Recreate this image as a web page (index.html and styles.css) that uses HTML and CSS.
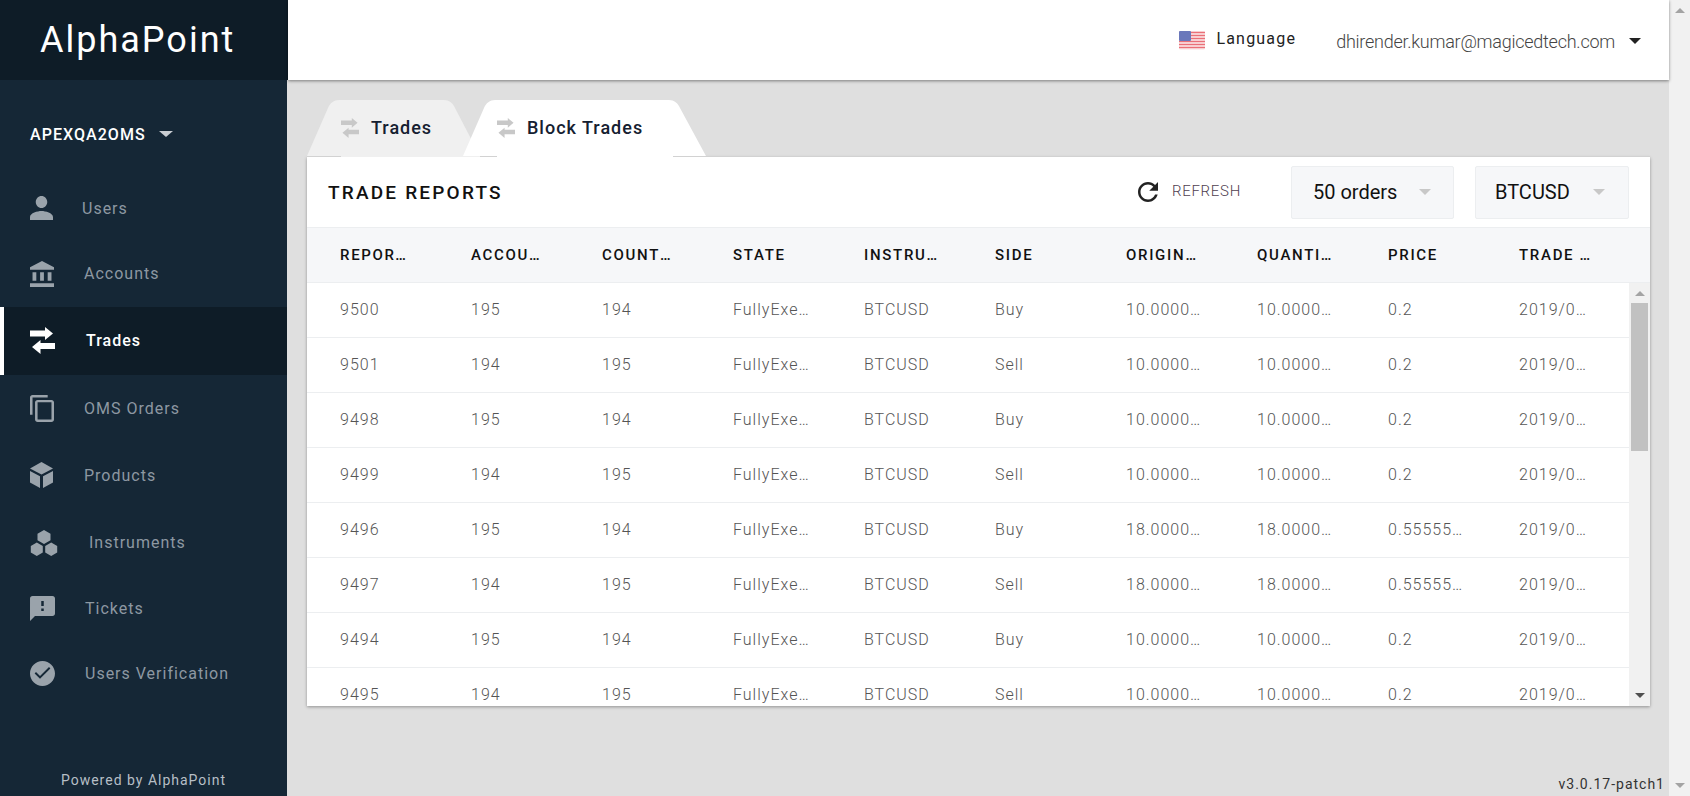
FILE: index.html
```html
<!DOCTYPE html>
<html lang="en">
<head>
    <meta charset="UTF-8">
    <meta name="viewport" content="width=device-width, initial-scale=1.0">
    <title>Trade Reports</title>
    <link rel="stylesheet" href="styles.css">
</head>
<body>
    <div class="app">
        <aside class="sidebar">
            <div class="logo">AlphaPoint</div>
            <div class="oms-select">APEXQA2OMS <span class="caret caret-light"></span></div>
            <nav class="nav">
                <a class="nav-item">
                    <svg class="icon icon-users" viewBox="4 4 16 16" preserveAspectRatio="none"><path d="M12 12c2.210 0 4-1.790 4-4s-1.790-4-4-4-4 1.790-4 4 1.790 4 4 4zm0 2c-2.670 0-8 1.340-8 4v2h16v-2c0-2.660-5.330-4-8-4z"/></svg>
                    Users
                </a>
                <a class="nav-item">
                    <svg class="icon icon-accounts" viewBox="2 1 19 21" preserveAspectRatio="none"><path d="M4 10v7h3v-7H4zm6 0v7h3v-7h-3zM2 22h19v-3H2v3zm14-12v7h3v-7h-3zm-4.500-9L2 6v2h19V6l-9.500-5z"/></svg>
                    Accounts
                </a>
                <a class="nav-item nav-item-active">
                    <svg class="icon icon-trades" viewBox="0 0 25 27"><path d="M0 3.500H15V0L23 6.500 15 13V9.500H0zM25 16H10.500V13L2 20 10.500 27V22H25z"/></svg>
                    Trades
                </a>
                <a class="nav-item">
                    <svg class="icon icon-orders" viewBox="2 1 19 22" preserveAspectRatio="none"><path d="M16 1H4c-1.100 0-2 .9-2 2v14h2V3h12V1zm3 4H8c-1.100 0-2 .9-2 2v14c0 1.100.9 2 2 2h11c1.100 0 2-.9 2-2V7c0-1.100-.9-2-2-2zm0 16H8V7h11v14z"/></svg>
                    OMS Orders
                </a>
                <a class="nav-item">
                    <svg class="icon icon-products" viewBox="0 0 23 26"><path d="M11.500 0L23 6.500 11.500 12.500 0 6.500zM0 9l10 5.300V26L0 20.500zM23 9l-10 5.300V26l10-5.500z"/></svg>
                    Products
                </a>
                <a class="nav-item">
                    <svg class="icon icon-instruments" viewBox="0 0 28 26"><path d="M14 0l6.500 3.700v6.600L14 14l-6.500-3.700V3.700zM6.800 12.500l6 3.500v6.500l-6 3.500-6-3.500V16zM21.200 12.500l6 3.500v6.500l-6 3.500-6-3.500V16z"/></svg>
                    Instruments
                </a>
                <a class="nav-item">
                    <svg class="icon icon-tickets" viewBox="2 2 20 20" preserveAspectRatio="none"><path d="M20 2H4c-1.100 0-1.990.9-1.990 2L2 22l4-4h14c1.100 0 2-.9 2-2V4c0-1.100-.9-2-2-2zm-7 12h-2v-2h2v2zm0-4h-2V6h2v4z"/></svg>
                    Tickets
                </a>
                <a class="nav-item">
                    <svg class="icon icon-verify" viewBox="2 2 20 20"><path d="M12 2C6.480 2 2 6.480 2 12s4.480 10 10 10 10-4.480 10-10S17.520 2 12 2zm-2 14.200l-4.300-4.300 1.100-1.100 3.200 3.200 7.200-7.200 1.100 1.100z"/></svg>
                    Users Verification
                </a>
            </nav>
            <div class="powered">Powered by AlphaPoint</div>
        </aside>

        <div class="main">
            <header class="topbar">
                <svg class="flag" viewBox="0 0 26 19">
                    <rect width="26" height="19" rx="2" fill="#fbeeee"/>
                    <path d="M0 1.500h26M0 4.500h26M0 7.500h26M0 10.500h26M0 13.500h26M0 16.500h26" stroke="#ea7078" stroke-width="1.600"/>
                    <rect width="12" height="10" rx="1" fill="#6a78bb"/>
                </svg>
                <span class="language">Language</span>
                <span class="user">dhirender.kumar@magicedtech.com</span>
                <span class="caret caret-dark"></span>
            </header>

            <div class="content">
                <div class="tabs">
                    <div class="tab">
                        <svg class="tab-shape" viewBox="0 0 173 56" preserveAspectRatio="none"><path d="M0 56L21 8C23 3 27 0 32 0H137C142 0 146 3 148 8L173 56z" fill="#f0f0f0"/></svg>
                        <svg class="tab-icon" viewBox="0 0 25 27" preserveAspectRatio="none"><path d="M0 3.500H15V0L23 6.500 15 13V9.500H0zM25 16H10.500V13L2 20 10.500 27V22H25z"/></svg>
                        <span>Trades</span>
                    </div>
                    <div class="tab tab-active">
                        <svg class="tab-shape" viewBox="0 0 243 56" preserveAspectRatio="none"><path d="M0 56L21 8C23 3 27 0 32 0H206C211 0 215 3 217 8L243 56z" fill="#fff"/></svg>
                        <svg class="tab-icon" viewBox="0 0 25 27" preserveAspectRatio="none"><path d="M0 3.500H15V0L23 6.500 15 13V9.500H0zM25 16H10.500V13L2 20 10.500 27V22H25z"/></svg>
                        <span>Block Trades</span>
                    </div>
                </div>

                <section class="card">
                    <div class="toolbar">
                        <h2 class="title">TRADE REPORTS</h2>
                        <button class="refresh">
                            <svg class="refresh-icon" viewBox="4 4 16 16"><path d="M17.650 6.350C16.200 4.900 14.210 4 12 4c-4.420 0-7.990 3.580-7.990 8s3.570 8 7.990 8c3.730 0 6.840-2.550 7.730-6h-2.080c-.82 2.330-3.040 4-5.650 4-3.310 0-6-2.690-6-6s2.690-6 6-6c1.660 0 3.140.69 4.220 1.780L13 11h7V4l-2.350 2.350z"/></svg>
                            REFRESH
                        </button>
                        <div class="select select-orders">50 orders <span class="caret caret-grey"></span></div>
                        <div class="select select-pair">BTCUSD <span class="caret caret-grey"></span></div>
                    </div>

                    <div class="row row-head">
                        <div class="cell">REPORT ID</div>
                        <div class="cell">ACCOUNT ID</div>
                        <div class="cell">COUNTERPARTY</div>
                        <div class="cell">STATE</div>
                        <div class="cell">INSTRUMENT</div>
                        <div class="cell">SIDE</div>
                        <div class="cell">ORIGINAL QUANTITY</div>
                        <div class="cell">QUANTITY</div>
                        <div class="cell">PRICE</div>
                        <div class="cell">TRADE TIME</div>
                    </div>

                    <div class="table-body">
                        <div class="rows">
                            <div class="row">
                                <div class="cell">9500</div><div class="cell">195</div><div class="cell">194</div><div class="cell">FullyExecuted</div><div class="cell">BTCUSD</div><div class="cell">Buy</div><div class="cell">10.00000000</div><div class="cell">10.00000000</div><div class="cell">0.2</div><div class="cell">2019/05/30</div>
                            </div>
                            <div class="row">
                                <div class="cell">9501</div><div class="cell">194</div><div class="cell">195</div><div class="cell">FullyExecuted</div><div class="cell">BTCUSD</div><div class="cell">Sell</div><div class="cell">10.00000000</div><div class="cell">10.00000000</div><div class="cell">0.2</div><div class="cell">2019/05/30</div>
                            </div>
                            <div class="row">
                                <div class="cell">9498</div><div class="cell">195</div><div class="cell">194</div><div class="cell">FullyExecuted</div><div class="cell">BTCUSD</div><div class="cell">Buy</div><div class="cell">10.00000000</div><div class="cell">10.00000000</div><div class="cell">0.2</div><div class="cell">2019/05/30</div>
                            </div>
                            <div class="row">
                                <div class="cell">9499</div><div class="cell">194</div><div class="cell">195</div><div class="cell">FullyExecuted</div><div class="cell">BTCUSD</div><div class="cell">Sell</div><div class="cell">10.00000000</div><div class="cell">10.00000000</div><div class="cell">0.2</div><div class="cell">2019/05/30</div>
                            </div>
                            <div class="row">
                                <div class="cell">9496</div><div class="cell">195</div><div class="cell">194</div><div class="cell">FullyExecuted</div><div class="cell">BTCUSD</div><div class="cell">Buy</div><div class="cell">18.00000000</div><div class="cell">18.00000000</div><div class="cell">0.55555556</div><div class="cell">2019/05/30</div>
                            </div>
                            <div class="row">
                                <div class="cell">9497</div><div class="cell">194</div><div class="cell">195</div><div class="cell">FullyExecuted</div><div class="cell">BTCUSD</div><div class="cell">Sell</div><div class="cell">18.00000000</div><div class="cell">18.00000000</div><div class="cell">0.55555556</div><div class="cell">2019/05/30</div>
                            </div>
                            <div class="row">
                                <div class="cell">9494</div><div class="cell">195</div><div class="cell">194</div><div class="cell">FullyExecuted</div><div class="cell">BTCUSD</div><div class="cell">Buy</div><div class="cell">10.00000000</div><div class="cell">10.00000000</div><div class="cell">0.2</div><div class="cell">2019/05/30</div>
                            </div>
                            <div class="row">
                                <div class="cell">9495</div><div class="cell">194</div><div class="cell">195</div><div class="cell">FullyExecuted</div><div class="cell">BTCUSD</div><div class="cell">Sell</div><div class="cell">10.00000000</div><div class="cell">10.00000000</div><div class="cell">0.2</div><div class="cell">2019/05/30</div>
                            </div>
                        </div>
                        <div class="scrollbar scrollbar-inner">
                            <span class="arrow-up"></span>
                            <span class="thumb"></span>
                            <span class="arrow-down"></span>
                        </div>
                    </div>
                </section>

                <div class="version">v3.0.17-patch1</div>
            </div>
        </div>

        <div class="scrollbar scrollbar-page">
            <span class="arrow-up"></span>
            <span class="arrow-down"></span>
        </div>
    </div>
</body>
</html>
```

FILE: styles.css
```css
* {
    box-sizing: border-box;
}

body {
    margin: 0;
    font-family: Roboto, "Liberation Sans", sans-serif;
    background-color: #dfdfdf;
    overflow: hidden;
}

.app {
    display: flex;
    height: 796px;
}

/* sidebar */
.sidebar {
    width: 288px;
    flex: none;
    display: flex;
    flex-direction: column;
    background-color: #152736;
    border-right: 1px solid #dfdfdf;
}

.logo {
    height: 80px;
    margin-right: -1px;
    padding-left: 40px;
    background-color: #0e1c27;
    color: #fff;
    font-size: 36px;
    line-height: 80px;
    letter-spacing: 2px;
}

.oms-select {
    height: 96px;
    padding: 12px 0 0 30px;
    display: flex;
    align-items: center;
    color: #fff;
    font-size: 16px;
    font-weight: 500;
    letter-spacing: 1.05px;
}

.oms-select .caret {
    margin-left: 13px;
}

.nav {
    display: grid;
    grid-template-rows: 64px 67px 68px 66px 68px 67px 65px 64px;
}

.nav-item {
    display: flex;
    align-items: center;
    padding-left: 30px;
    color: #8d98a2;
    font-size: 16px;
    letter-spacing: 1px;
}

.nav-item-active {
    background-color: #0e1c27;
    border-left: 4px solid #fff;
    padding: 0 0 2px 26px;
    color: #fff;
    font-weight: 500;
}

.icon {
    flex: none;
    fill: #9aa3ab;
}

.nav-item-active .icon {
    fill: #fff;
}

.icon-users { width: 23px; height: 24px; margin-right: 29px; }
.icon-accounts { width: 24px; height: 26px; margin-right: 30px; }
.icon-trades { width: 25px; height: 27px; margin-right: 31px; }
.icon-orders { width: 24px; height: 27px; margin-right: 30px; }
.icon-products { width: 23px; height: 26px; margin-right: 31px; }
.icon-instruments { width: 28px; height: 26px; margin-right: 31px; }
.icon-tickets { width: 25px; height: 25px; margin-right: 30px; }
.icon-verify { width: 25px; height: 25px; margin-right: 30px; }

.powered {
    margin-top: auto;
    padding-bottom: 8px;
    text-align: center;
    color: #b7bfc6;
    font-size: 14px;
    letter-spacing: 1px;
}

/* carets */
.caret {
    display: inline-block;
    width: 0;
    height: 0;
    border-left: 6px solid transparent;
    border-right: 6px solid transparent;
    border-top: 6px solid currentColor;
}

.caret-light {
    color: #c9ced3;
    border-left-width: 7px;
    border-right-width: 7px;
}

.caret-dark { color: #222; }
.caret-grey { color: #c8c8c8; }

/* main */
.main {
    flex: 1;
    min-width: 0;
    display: flex;
    flex-direction: column;
}

.topbar {
    height: 80px;
    display: flex;
    align-items: center;
    padding: 2px 28px 0 0;
    background-color: #fff;
    box-shadow: 0 1px 3px rgba(0, 0, 0, 0.45);
    position: relative;
}

.flag {
    width: 26px;
    height: 19px;
    margin-left: auto;
    margin-right: 11px;
    margin-top: -2px;
}

.language {
    margin-top: -5px;
    margin-right: 40px;
    color: #222;
    font-size: 16px;
    letter-spacing: 1.2px;
}

.user {
    margin-right: 14px;
    color: #444;
    font-size: 18px;
    font-weight: 300;
    letter-spacing: -0.25px;
}

.content {
    flex: 1;
    position: relative;
    padding: 20px 19px 0 19px;
}

/* tabs */
.tabs {
    display: flex;
    height: 57px;
    position: relative;
    z-index: 1;
}

.tab {
    position: relative;
    width: 173px;
    height: 56px;
    display: flex;
    align-items: center;
    padding: 0 0 1px 34px;
    color: #152030;
    font-size: 18px;
    font-weight: 500;
    letter-spacing: 1px;
}

.tab span,
.tab-icon {
    position: relative;
}

.tab-shape {
    position: absolute;
    left: 0;
    top: 0;
    width: 100%;
    height: 100%;
}

.tab-icon {
    width: 18px;
    height: 20px;
    margin-right: 12px;
    fill: #c8c8c8;
}

.tab::after {
    content: "";
    position: absolute;
    left: 34px;
    right: 0;
    bottom: -1px;
    height: 2px;
    background-color: #f0f0f0;
}

.tab-active {
    width: 243px;
    margin-left: -17px;
}

.tab-active::after {
    right: 33px;
    background-color: #fff;
}

/* card */
.card {
    width: 1343px;
    height: 549px;
    display: flex;
    flex-direction: column;
    background-color: #fff;
    box-shadow: 0 -1px 0 #d2d2d2, 0 1px 3px rgba(0, 0, 0, 0.35);
}

.toolbar {
    height: 70px;
    flex: none;
    display: flex;
    align-items: center;
    padding: 0 21px;
}

.title {
    margin: 0 auto 0 0;
    color: #111;
    font-size: 19px;
    font-weight: 500;
    letter-spacing: 2.2px;
}

.refresh {
    display: flex;
    align-items: center;
    margin-right: 50px;
    padding: 0 0 2px;
    border: none;
    background: none;
    color: #4f4050;
    font-family: inherit;
    font-size: 15px;
    font-weight: 300;
    letter-spacing: 0.7px;
}

.refresh-icon {
    width: 20px;
    height: 20px;
    margin: 2px 14px 0 0;
    fill: #222;
}

.select {
    height: 53px;
    display: flex;
    align-items: center;
    justify-content: space-between;
    background-color: #f6f7f9;
    border: 1px solid #eceef0;
    border-radius: 2px;
    color: #111;
    font-size: 20px;
}

.select-orders {
    width: 163px;
    margin-right: 21px;
    padding: 0 22px 0 21px;
}

.select-pair {
    width: 154px;
    padding: 0 23px 0 19px;
}

/* table */
.row {
    display: grid;
    grid-template-columns: repeat(10, 131px);
    height: 55px;
    padding: 0 0 2px 12px;
    align-items: center;
    border-bottom: 1px solid #eceef0;
}

.row-head {
    flex: none;
    height: 56px;
    padding-bottom: 0;
    background-color: #f6f7f9;
    border-top: 1px solid #eceef0;
}

.cell {
    padding: 0 34px 0 21px;
    white-space: nowrap;
    overflow: hidden;
    text-overflow: ellipsis;
    color: #555;
    font-size: 16px;
    font-weight: 300;
    letter-spacing: 1px;
}

.row-head .cell {
    color: #111;
    font-size: 15px;
    font-weight: 500;
    letter-spacing: 1.7px;
}

.table-body {
    flex: 1;
    min-height: 0;
    display: flex;
}

.rows {
    flex: 1;
    min-width: 0;
    overflow: hidden;
}

/* scrollbars */
.scrollbar {
    width: 21px;
    flex: none;
    display: flex;
    flex-direction: column;
    align-items: center;
    background-color: #f1f1f1;
}

.arrow-up,
.arrow-down {
    width: 0;
    height: 0;
    border-left: 5px solid transparent;
    border-right: 5px solid transparent;
}

.arrow-up {
    margin-top: 8px;
    border-bottom: 5px solid #a3a3a3;
}

.arrow-down {
    margin-top: auto;
    margin-bottom: 8px;
    border-top: 5px solid #505050;
}

.scrollbar-page .arrow-down {
    border-top-color: #a3a3a3;
}

.thumb {
    width: 17px;
    height: 148px;
    margin-top: 7px;
    background-color: #c1c1c1;
}

.version {
    position: absolute;
    right: 4px;
    bottom: 4px;
    color: #333;
    font-size: 14px;
    letter-spacing: 1px;
}
```
